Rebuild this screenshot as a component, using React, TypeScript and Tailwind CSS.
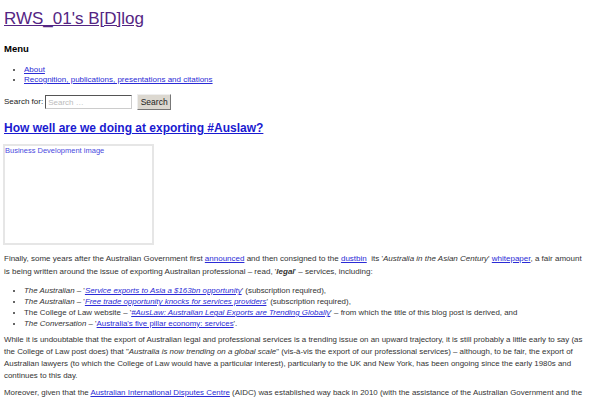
const link = "text-[#2b2bd6] underline";

export default function App() {
  return (
    <div className="h-[400px] w-[600px] overflow-hidden bg-white pl-[4px] font-['Liberation_Sans',Arial,sans-serif] text-[8px] text-[#333]">
      <header className="pt-[8px]">
        <h1 className="text-[17px] leading-[22px]">
          <a href="#" className="text-[#542583] underline">RWS_01's B[D]log</a>
        </h1>
        <nav className="mt-[13px]">
          <h2 className="text-[9.5px] font-bold leading-[12px] text-black">Menu</h2>
          <ul className="mt-[10px] list-disc pl-[20px] leading-[10px]">
            <li><a href="#" className={link}>About</a></li>
            <li><a href="#" className={link}>Recognition, publications, presentations and citations</a></li>
          </ul>
        </nav>
        <form className="mt-[9px] flex items-center gap-[2px]">
          <label className="text-[#222]">Search for:</label>
          <input
            placeholder="Search …"
            className="h-[14px] w-[87px] border border-t-[#555] border-l-[#555] border-r-[#ccc] border-b-[#ccc] px-[2px] text-[8px] placeholder:text-[#bbb]"
          />
          <button type="button" className="ml-[3px] h-[16px] w-[34px] border border-t-[#eee] border-l-[#eee] border-r-[#777] border-b-[#777] bg-[#dcd8d0] text-[8.5px] text-[#222]">
            Search
          </button>
        </form>
      </header>

      <article className="mt-[10px] w-[582px] text-[7.9px]">
        <h2 className="text-[12px] font-bold leading-[16px]">
          <a href="#" className="text-[#1a1ad0] underline">How well are we doing at exporting #Auslaw?</a>
        </h2>
        <div className="ml-[-1px] mt-[8px] h-[101px] w-[151px] border-2 border-[#e6e6e6] text-[7.5px] leading-[10px] text-[#4a4ae0]">
          Business Development image
        </div>

        <p className="mt-[8px] text-[8px] leading-[12.5px]">
          Finally, some years after the Australian Government first <a href="#" className={link}>announced</a> and then consigned to the <a href="#" className={link}>dustbin</a>&nbsp; its '<i>Australia in the Asian Century</i>' <a href="#" className={link}>whitepaper</a>, a fair amount is being written around the issue of exporting Australian professional – read, '<i className="font-bold">legal</i>' – services, including:
        </p>
        <ul className="mt-[7px] list-disc pl-[20px] leading-[11px]">
          <li><i>The Australian</i> – '<a href="#" className={link}><i>Service exports to Asia a $163bn opportunity</i></a>' (subscription required),</li>
          <li><i>The Australian</i> – '<a href="#" className={link}><i>Free trade opportunity knocks for services providers</i></a>' (subscription required),</li>
          <li>The College of Law website – '<a href="#" className={link}><i>#AusLaw: Australian Legal Exports are Trending Globally</i></a>' – from which the title of this blog post is derived, and</li>
          <li><i>The Conversation</i> – '<a href="#" className={link}>Australia's five pillar economy: services</a>'.</li>
        </ul>
        <p className="mt-[5px] leading-[12px]">
          While it is undoubtable that the export of Australian legal and professional services is a trending issue on an upward trajectory, it is still probably a little early to say (as the College of Law post does) that "<i>Australia is now trending on a global scale</i>" (vis-à-vis the export of our professional services) – although, to be fair, the export of Australian lawyers (to which the College of Law would have a particular interest), particularly to the UK and New York, has been ongoing since the early 1980s and continues to this day.
        </p>
        <p className="mt-[5px] leading-[12px]">
          Moreover, given that the <a href="#" className={link}>Australian International Disputes Centre</a> (AIDC) was established way back in 2010 (with the assistance of the Australian Government and the Government of the State of New South Wales) and still lags behind both the Singapore International Arbitration Centre and the Hong Kong International Arbitration Centre as a venue of choice for the resolution of international commercial disputes, there is still much to be done.
        </p>
      </article>
    </div>
  );
}
